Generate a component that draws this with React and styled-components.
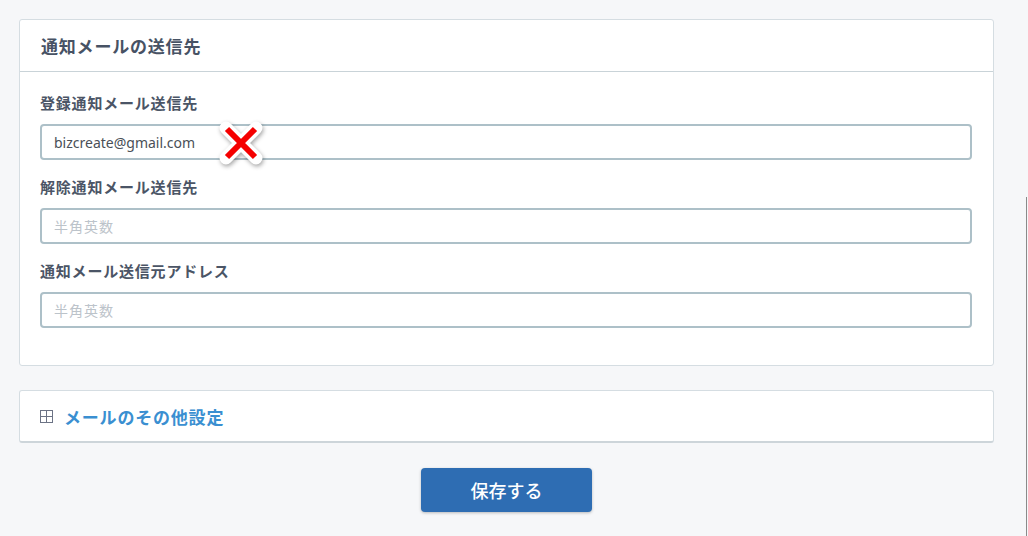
import React from "react";
import styled, { createGlobalStyle } from "styled-components";

const Global = createGlobalStyle`
  html, body { margin: 0; padding: 0; background: #f6f7f9; }
  body { font-family: "Noto Sans", "Noto Sans CJK JP", sans-serif; }
  * { box-sizing: border-box; }
`;

const Page = styled.div`
  position: relative;
  width: 1028px;
  height: 536px;
  overflow: hidden;
  padding: 19px 34px 0 19px;
  display: flex;
  flex-direction: column;
  align-items: stretch;
`;

const EdgeLine = styled.div`
  position: absolute;
  left: 1026px;
  top: 197px;
  bottom: 0;
  width: 1px;
  background: #8a8a8a;
`;

const Card = styled.section`
  background: #fff;
  border: 1px solid #d5dde2;
  border-radius: 3px;
`;

const CardHeader = styled.div`
  height: 52px;
  display: flex;
  align-items: center;
  padding-left: 21px;
  border-bottom: 1px solid #c9d3d8;
  font-family: "Noto Sans CJK JP", sans-serif;
  font-weight: 700;
  font-size: 17px;
  letter-spacing: 0.8px;
  color: #475264;
`;

const CardBody = styled.div`
  padding: 21px 21px 37px 20px;
  display: flex;
  flex-direction: column;
  gap: 17px;
`;

const Field = styled.div`
  display: flex;
  flex-direction: column;
`;

const Label = styled.label`
  font-family: "Noto Sans CJK JP", sans-serif;
  font-weight: 700;
  font-size: 15px;
  letter-spacing: 0.8px;
  line-height: 20px;
  color: #4b5566;
  margin-bottom: 11px;
`;

const InputWrap = styled.div`
  position: relative;
`;

const Input = styled.input`
  width: 100%;
  height: 36px;
  border: 2px solid #adc0c8;
  border-radius: 4px;
  padding: 0 12px;
  font-family: "Noto Sans", "Noto Sans CJK JP", sans-serif;
  font-size: 14px;
  color: #4a4f57;
  background: #fff;
  outline: none;
  &::placeholder {
    color: #bcc3ca;
    font-family: "Noto Sans CJK JP", sans-serif;
    letter-spacing: 1px;
  }
`;

const ErrorMark = styled.svg`
  position: absolute;
  left: 175px;
  top: -7px;
  width: 52px;
  height: 52px;
  filter: drop-shadow(1px 2px 2px rgba(0, 0, 0, 0.35));
`;

const Collapse = styled.section`
  margin-top: 24px;
  height: 53px;
  background: #fff;
  border: 1px solid #d5dde2;
  border-bottom: 2px solid #cdd5da;
  border-radius: 3px;
  display: flex;
  align-items: center;
  padding-left: 20px;
  gap: 11px;
`;

const PlusBox = styled.svg`
  width: 13px;
  height: 13px;
  flex: none;
`;

const CollapseTitle = styled.span`
  font-family: "Noto Sans CJK JP", sans-serif;
  font-weight: 700;
  font-size: 17px;
  letter-spacing: 0.8px;
  color: #3a8fd1;
`;

const Actions = styled.div`
  display: flex;
  justify-content: center;
  margin-top: 25px;
`;

const SaveButton = styled.button`
  width: 171px;
  height: 44px;
  border: none;
  border-radius: 4px;
  background: #2e6db3;
  color: #fff;
  font-family: "Noto Sans CJK JP", sans-serif;
  font-size: 18px;
  font-weight: 500;
  box-shadow: 0 1px 3px rgba(0, 0, 0, 0.25);
  cursor: pointer;
`;

const fields = [
  { label: "登録通知メール送信先", value: "bizcreate@gmail.com", error: true },
  { label: "解除通知メール送信先", value: "" },
  { label: "通知メール送信元アドレス", value: "" },
];

export default function App() {
  return (
    <>
      <Global />
      <Page>
        <Card>
          <CardHeader>通知メールの送信先</CardHeader>
          <CardBody>
            {fields.map((f) => (
              <Field key={f.label}>
                <Label>{f.label}</Label>
                <InputWrap>
                  <Input defaultValue={f.value} placeholder="半角英数" />
                  {f.error && (
                    <ErrorMark viewBox="0 0 52 52">
                      <path
                        d="M11 11 L41 41 M41 11 L11 41"
                        stroke="#fff"
                        strokeWidth="13"
                        strokeLinecap="round"
                      />
                      <path
                        d="M12 12 L40 40 M40 12 L12 40"
                        stroke="#f50000"
                        strokeWidth="6"
                        strokeLinecap="butt"
                      />
                    </ErrorMark>
                  )}
                </InputWrap>
              </Field>
            ))}
          </CardBody>
        </Card>
        <Collapse>
          <PlusBox viewBox="0 0 13 13">
            <rect x="0.5" y="0.5" width="12" height="12" fill="none" stroke="#6c7385" />
            <path d="M6.5 1 V12 M1 6.5 H12" stroke="#6c7385" />
          </PlusBox>
          <CollapseTitle>メールのその他設定</CollapseTitle>
        </Collapse>
        <Actions>
          <SaveButton>保存する</SaveButton>
        </Actions>
        <EdgeLine />
      </Page>
    </>
  );
}
